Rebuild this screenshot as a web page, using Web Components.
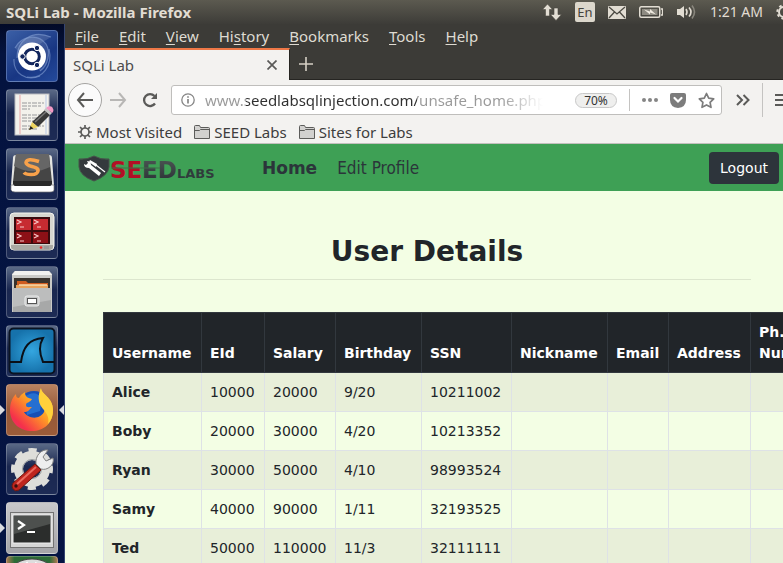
<!DOCTYPE html>
<html lang="en">
<head>
<meta charset="utf-8">
<title>SQLi Lab</title>
<style>
  html, body { margin: 0; height: 100%; overflow: hidden; background: #f3fee4; }
</style>
</head>
<body>
<lab-desktop></lab-desktop>

<script>
function define(name, html) {
  const template = document.createElement('template');
  template.innerHTML = html;
  customElements.define(name, class extends HTMLElement {
    constructor() {
      super();
      this.attachShadow({ mode: 'open' }).append(template.content.cloneNode(true));
    }
    connectedCallback() {
      const label = this.getAttribute('label');
      const control = this.shadowRoot.querySelector('[data-label]');
      if (label && control) control.setAttribute('aria-label', label);
    }
  });
}

/* System panel along the top edge */
define('top-panel', `
<style>
  :host { display: flex; align-items: center; height: 24px; padding-left: 6px; color: #e2ddd3;
    background: linear-gradient(#5c5a50, #3d3c38); overflow: hidden; white-space: nowrap; }
  h1 { flex: 1; margin: 0; font: bold 15px/24px "Noto Sans", sans-serif; }
  .tray { display: flex; align-items: center; gap: 13px; margin-right: -9px; font: 14px/24px "Noto Sans", sans-serif; }
  svg { display: block; flex: none; }
  .lang { width: 20px; height: 20px; border-radius: 2px; background: #dcd7cc; color: #45433d; text-align: center; font-size: 13px; line-height: 20px; }
</style>
<h1>SQLi Lab - Mozilla Firefox</h1>
<div class="tray">
  <svg width="20" height="18" viewBox="0 0 20 18" fill="#e2ddd3" stroke="#4a4840" stroke-width=".6"><path d="M5.500 1l5 5.500h-3V13h-4V6.500h-3z"/><path d="M12 5h4v6.500h3.500l-5.500 6-5.500-6H12z"/></svg>
  <span class="lang">En</span>
  <svg width="18" height="13" viewBox="0 0 18 13"><rect width="18" height="13" rx="1" fill="#e2ddd3"/><path d="M1 1l8 7 8-7M1 12l5.500-6M17 12l-5.500-6" fill="none" stroke="#4b4942" stroke-width="1.300"/></svg>
  <svg width="24" height="14" viewBox="0 0 24 14"><rect x=".75" y="1.750" width="20" height="10.500" rx="1.500" fill="none" stroke="#e2ddd3" stroke-width="1.500"/><rect x="3" y="4" width="15.500" height="6" fill="#8e8b82"/><path d="M22 4h1.500v6H22" fill="none" stroke="#e2ddd3" stroke-width="1.300"/><path d="M5 4.500l6 2V4l6 5.500-6-2v2z" fill="#efeae0"/></svg>
  <svg width="21" height="16" viewBox="0 0 21 16" fill="none" stroke="#e2ddd3" stroke-width="1.600"><path d="M1 5h3l4-3v12l-4-3H1z" fill="#e2ddd3" stroke="none"/><path d="M10 5q2 3 0 6M13 3.500q4 4.500 0 9"/><path d="M16 1.500q5 6.500 0 13" stroke="#89867d"/></svg>
  <time>1:21 AM</time>
  <svg width="16" height="16" viewBox="0 0 16 16" fill="none" stroke="#e2ddd3"><circle cx="8" cy="8" r="5" stroke-width="2"/><circle cx="8" cy="8" r="6.700" stroke-width="2" stroke-dasharray="2.600 2.660"/></svg>
</div>`);

/* One square tile of the launcher */
define('launcher-tile', `
<style>
  :host { display: block; position: relative; flex: none; height: 52px; }
  button { display: block; box-sizing: border-box; width: 100%; height: 52px; padding: 0; border: 1px solid rgba(255,255,255,.22); border-radius: 4px;
    background: var(--tile, linear-gradient(#5a6986, #1a2750 45%, #1d2b55)); overflow: hidden; }
  ::slotted(svg) { display: block; width: 50px; height: 50px; }
  .pip { display: none; position: absolute; top: 21px; width: 0; height: 0; border: 5px solid transparent; }
  .l { left: -6px; border-left-color: #d9dbe0; border-right-width: 0; }
  .r { right: -6px; border-right-color: #d9dbe0; border-left-width: 0; }
  :host([running]) .l, :host([focused]) .r { display: block; }
</style>
<button type="button" data-label><slot></slot></button><i class="pip l"></i><i class="pip r"></i>`);

define('app-launcher', `
<style>
  :host { display: flex; flex-direction: column; gap: 7px; box-sizing: border-box; padding: 6px 6px 0; overflow: hidden;
    background: linear-gradient(#020a27, #04133f 30px, #051443); border-right: 1px solid #354571; }
  .folded { margin-top: -5px; }
</style>
<launcher-tile label="Search your computer" style="--tile: linear-gradient(145deg, #3b5fa6, #183683 60%, #244a9c)">
  <svg viewBox="0 0 50 50"><g fill="none" stroke="#8ba6d8" stroke-opacity=".55" stroke-width="1.200"><path d="M44 6C24-2 10 10 10 27" fill="#fff" fill-opacity=".12"/><path d="M7 28c-1 14 12 23 26 17"/><path d="M20 46c16 3 26-12 22-28"/><path d="M8 17C14 5 31 2 39 13c5 8 2 22-6 27" fill="#fff" fill-opacity=".12"/></g><circle cx="25" cy="25.500" r="14" fill="#fff"/><circle cx="25" cy="25.500" r="7.300" fill="none" stroke="#12265d" stroke-width="3"/><g fill="#12265d" stroke="#fff"><circle cx="15.500" cy="25.500" r="2.700"/><circle cx="30" cy="17" r="2.700"/><circle cx="30" cy="34" r="2.700"/></g></svg>
</launcher-tile>
<launcher-tile label="Text Editor">
  <svg viewBox="0 0 50 50"><rect x="8" y="4" width="34" height="41" fill="#f3f2ec" stroke="#b9bbc0"/><path d="M13 5v39" stroke="#e9a7a7"/><path d="M39 5v39" stroke="#b8c9e6"/><path d="M15 13h22M15 16h20M15 19h8M15 25h22M15 28h18M15 31h20M15 36h22M15 39h16" stroke="#979899" stroke-width="1.200" stroke-dasharray="5 1 3 1"/><path d="M25 32l13-12 5 5-12 12z" fill="#383939"/><path d="M28 32l12-11" stroke="#777" stroke-width="1.500"/><path d="M22 40l3-8 6 5z" fill="#ecd35b"/><path d="M22 40l1.500-4 3 2.500z" fill="#222"/><path d="M37 20l2-2 6 5-2 2z" fill="#c6c6c6"/><path d="M39 18l2-1.500q3-1 4.500 1t.5 4.500L45 23z" fill="#f299c4"/></svg>
</launcher-tile>
<launcher-tile label="Sublime Text">
  <svg viewBox="0 0 50 50"><path d="M4 36L6 9q0-3 3-3h33q3 0 3 3l2 27-1 6H5z" fill="#e4e4e1"/><path d="M4 36v5q1 2 4 2h35q4 0 4-2v-5z" fill="#fff" stroke="#777" stroke-width=".7"/><path d="M9 5h33l3 28q0 4-3 4H9q-3 0-3-4z" fill="#454545"/><path d="M9 5h33l1 13Q25 27 7 17z" fill="#666"/><path d="M6 32h39v3l-2 2H8l-2-2z" fill="#292929"/><path d="M32 12.500q-12-4-13 1c0 5 13 3 12 8.500-1 5-12 4-14 1.500" fill="none" stroke="#f8a14a" stroke-width="3.600"/></svg>
</launcher-tile>
<launcher-tile label="Terminator">
  <svg viewBox="0 0 50 50"><rect x="3" y="5" width="44" height="37" rx="4" fill="#d6d6cf" stroke="#f5f5ef"/><path d="M4 37h42v2q0 3-4 3H8q-4 0-4-3z" fill="#aaa9a3"/><rect x="7" y="9" width="36" height="27" fill="#390b0e"/><path d="M9 11h15v11H9zM26 11h15v11H26z" fill="#c72b31"/><path d="M9 24h15v11H9zM26 24h15v11H26z" fill="#8c1016"/><path d="M10 12l4 2-4 2m3 3h4M27 12l4 2-4 2m3 3h4M10 26l4 2-4 2m3 3h4M27 26l4 2-4 2m3 3h4" fill="none" stroke="#f7c7c7" stroke-width="1.200"/><circle cx="34" cy="39.500" r="1.300" fill="#f12525"/><rect x="37" y="38" width="5" height="3" fill="#999"/></svg>
</launcher-tile>
<launcher-tile label="Files">
  <svg viewBox="0 0 50 50"><path d="M8 4h34l3 3v38H5V7z" fill="#cacac7"/><path d="M5 8h40l-3-4H8z" fill="#f1f1ef"/><rect x="7" y="11" width="36" height="13" fill="#39332d"/><path d="M10 21v-7h9l2 2h20v5z" fill="#cf5c1f"/><path d="M9 23v-5h32v5z" fill="#e7a25b"/><path d="M12 18h28" stroke="#f8dbac" stroke-width="1.500"/><path d="M6 21h38v24H6z" fill="#a7a8a8"/><path d="M6 21h38v12L6 40z" fill="#bcbdbd"/><rect x="18" y="29" width="14" height="10" rx="2" fill="#c5c6c6" stroke="#eee"/><rect x="20.500" y="31.500" width="9" height="5" fill="#fff" stroke="#555"/></svg>
</launcher-tile>
<launcher-tile label="Wireshark">
  <svg viewBox="0 0 50 50"><defs><radialGradient id="sea"><stop stop-color="#34a6e0"/><stop offset="1" stop-color="#1672ab"/></radialGradient></defs><rect x="2.500" y="2.500" width="45" height="45" rx="4" fill="url(#sea)" stroke="#0a1322" stroke-width="2"/><path d="M3 36h11C16 21 22 13 36 12q-6 10 0 24h11" fill="none" stroke="#0a1018" stroke-width="2"/></svg>
</launcher-tile>
<launcher-tile label="Firefox" running focused style="--tile: linear-gradient(#b9815f, #955939 50%, #9c5c39)">
  <svg viewBox="0 0 50 50"><defs><linearGradient id="fox" x1="1" y1="0" x2="0" y2="1"><stop stop-color="#fff14a"/><stop offset=".45" stop-color="#ff9a25"/><stop offset=".8" stop-color="#f5304b"/><stop offset="1" stop-color="#e52b80"/></linearGradient></defs><circle cx="27" cy="23" r="17" fill="#184fb5"/><path d="M18 12Q27 4 35 13l-2 13-13 4z" fill="#256fd1"/><path d="M34 3c0 6 12 9 12 22 0 13-9 21-21 21S3 38 3 25c0-7 2-12 6-16 0 3 1 4 3 4 2-4 5-5 6-6 0 4 2 6 7 7-2 4-6 3-6 6s3 2 6 2c-3 3-4 5-8 5 3 6 15 9 20 0 3-6-1-10-5-13 0-4 1-8 2-11z" fill="url(#fox)"/><path d="M34 3c0 7 12 9 12 22 0 6-2 11-5 14 3-11-8-15-9-23-1-6 1-10 2-13z" fill="#ffd13b"/></svg>
</launcher-tile>
<launcher-tile label="System Settings">
  <svg viewBox="0 0 50 50"><circle cx="25" cy="25" r="13.500" fill="none" stroke="#dededa" stroke-width="9"/><circle cx="25" cy="25" r="18.500" fill="none" stroke="#dededa" stroke-width="5" stroke-dasharray="8 6.530" stroke-dashoffset="4"/><circle cx="25" cy="25" r="9.500" fill="none" stroke="#999d9f"/><path d="M29 20c-1-8 5-15 12-14l-5 7 3 4 7-3c2 7-6 13-12 11z" fill="#eee" stroke="#838383"/><path d="M28 20l6 6-22 20q-4 2-6-1t0-6z" fill="#bf251e" stroke="#721910"/><path d="M29 23L10 40" stroke="#eb6a5e" stroke-width="2"/><circle cx="9" cy="42" r="1.700" fill="#36100e"/></svg>
</launcher-tile>
<launcher-tile label="Terminal" running style="--tile: linear-gradient(#c8c8ca, #a4a4a8)">
  <svg viewBox="0 0 50 50"><rect x="3.500" y="9.500" width="43" height="35" fill="#d6d6d6" stroke="#737373"/><rect x="6" y="12" width="38" height="28" fill="#2b2d2c" stroke="#efefef"/><path d="M7 13h36v8L7 31z" fill="#4d504e"/><path d="M11 18l6 4-6 4M20 29h8" fill="none" stroke="#fff" stroke-width="2.200"/></svg>
</launcher-tile>
<launcher-tile class="folded" label="Trash" style="--tile: linear-gradient(90deg, #a87950, #2c6b37 15%, #2c6b37 85%, #a87950)">
  <svg viewBox="0 0 50 50"><ellipse cx="25" cy="15" rx="21" ry="13" fill="#ddd" stroke="#444"/><ellipse cx="25" cy="15" rx="16" ry="9" fill="#333"/><path d="M15 10l5-4 3 5M28 6l7 3-5 4" fill="none" stroke="#fff" stroke-width="2"/></svg>
</launcher-tile>`);

define('browser-menu', `
<style>
  :host { display: flex; height: 24px; background: #3c3b37; }
  button { padding: 0; margin: 0 10px; border: 0; background: none; color: #dfdbd2; font: 15px/24px "Noto Sans", sans-serif; }
  u { text-underline-offset: 2px; }
</style>
<button type="button"><u>F</u>ile</button><button type="button"><u>E</u>dit</button><button type="button"><u>V</u>iew</button><button type="button">Hi<u>s</u>tory</button><button type="button"><u>B</u>ookmarks</button><button type="button"><u>T</u>ools</button><button type="button"><u>H</u>elp</button>`);

define('browser-tabs', `
<style>
  :host { display: flex; height: 32px; background: #3c3b37; box-shadow: inset 0 -1px #262522; }
  .tab { display: flex; align-items: center; justify-content: space-between; box-sizing: border-box; width: 225px; padding: 0 12px 0 8px;
    border-top: 2px solid #ef7847; border-right: 1px solid #262522; background: #f3f2f0; color: #4c4c4c; font: 15px/28px "Noto Sans", sans-serif; }
  button { display: block; padding: 0; border: 0; background: none; }
  svg { display: block; }
  .new { margin-left: 8px; }
</style>
<div class="tab"><span>SQLi Lab</span><button type="button" aria-label="Close tab"><svg width="10" height="10" viewBox="0 0 10 10"><path d="M.5.5l9 9m0-9l-9 9" stroke="#5a5a58" stroke-width="1.700"/></svg></button></div>
<button class="new" type="button" aria-label="New tab"><svg width="16" height="16" viewBox="0 0 16 16"><path d="M8 1v14M1 8h14" stroke="#d5d0c5" stroke-width="1.600"/></svg></button>`);

define('address-bar', `
<style>
  :host { display: flex; align-items: center; height: 40px; padding-left: 3px; background: #f3f2f0; overflow: hidden; }
  button { display: grid; place-items: center; flex: none; padding: 0; border: 0; background: none; height: 28px; }
  svg { display: block; fill: none; stroke: #5a5a58; }
  .back { width: 34px; height: 34px; box-sizing: border-box; border: 1px solid #a5a4a2; border-radius: 50%; background: #fbfbfb; }
  .forward, .reload { width: 32px; }
  .url { display: flex; align-items: center; flex: 1; min-width: 0; box-sizing: border-box; height: 30px; margin-left: 5px; padding: 0 6px 0 9px;
    border: 1px solid #bfbebc; border-radius: 3px; background: #fff; }
  input { flex: 1; min-width: 0; margin-left: 10px; padding: 0; border: 0; outline: 0; height: 26px; color: #333;
    font: 15px/26px "Noto Sans", sans-serif; -webkit-text-fill-color: transparent;
    background: linear-gradient(90deg, #999 41px, #2f2f2f 41px, #2f2f2f 212px, #999 212px, #999 296px, #fff 338px); -webkit-background-clip: text; background-clip: text; }
  .zoom { width: 42px; height: 15px; box-sizing: border-box; border: 1px solid #c8c8c8; border-radius: 8px; background: #efefee; color: #333; font: 12px/13px "Noto Sans", sans-serif; }
  .rule { flex: none; width: 1px; height: 22px; margin: 0 12px; background: #c4c3c1; }
  .actions { display: flex; gap: 12px; }
  .more { margin-left: 14px; }
  .tall { height: 34px; margin-right: 12px; }
</style>
<button class="back" type="button" aria-label="Back"><svg width="18" height="16" viewBox="0 0 18 16" stroke-width="2"><path d="M8 1L2 8l6 7M2 8h15"/></svg></button>
<button class="forward" type="button" aria-label="Forward" disabled><svg width="18" height="16" viewBox="0 0 18 16" stroke-width="2" style="stroke:#b8b7b5"><path d="M10 1l6 7-6 7M16 8H1"/></svg></button>
<button class="reload" type="button" aria-label="Reload"><svg width="16" height="16" viewBox="0 0 16 16" stroke-width="2.300"><path d="M12.500 4A6 6 0 1 0 13 11.500"/><path d="M15 1v6H9z" fill="#5a5a58" stroke="none"/></svg></button>
<div class="url">
  <svg width="14" height="14" viewBox="0 0 14 14" style="stroke:#868686"><circle cx="7" cy="7" r="6.200" stroke-width="1.300"/><path d="M7 6v4.500M7 3.200v1.600" stroke-width="1.700"/></svg>
  <input type="text" aria-label="Address" value="www.seedlabsqlinjection.com/unsafe_home.php">
  <button class="zoom" type="button">70%</button>
  <span class="rule"></span>
  <div class="actions">
    <button type="button" aria-label="Page actions"><svg width="16" height="4" viewBox="0 0 16 4"><g fill="#858585" stroke="none"><circle cx="2" cy="2" r="2"/><circle cx="8" cy="2" r="2"/><circle cx="14" cy="2" r="2"/></g></svg></button>
    <button type="button" aria-label="Save to Pocket"><svg width="16" height="15" viewBox="0 0 16 15"><path d="M2 0h12q2 0 2 2v5q0 7-8 8-8-1-8-8V2q0-2 2-2z" fill="#7c7c7c" stroke="none"/><path d="M4.500 5L8 8.500 11.500 5" stroke="#fff" stroke-width="2.200" stroke-linecap="round"/></svg></button>
    <button type="button" aria-label="Bookmark this page"><svg width="17" height="17" viewBox="0 0 17 17" style="stroke:#7c7c7c" stroke-width="1.700" stroke-linejoin="round"><path d="M8.500 1.500l2.200 4.600 5 .7-3.600 3.500.9 5-4.500-2.400L4 15.300l.9-5L1.300 6.800l5-.7z"/></svg></button>
  </div>
</div>
<button class="more" type="button" aria-label="More tools"><svg width="14" height="12" viewBox="0 0 14 12" stroke-width="2"><path d="M1 1l5 5-5 5M7.500 1l5 5-5 5"/></svg></button>
<span class="rule tall"></span>
<button type="button" aria-label="Open menu" style="margin-right:-8px"><svg width="16" height="12" viewBox="0 0 16 12" stroke-width="2"><path d="M0 1h16M0 6h16M0 11h16"/></svg></button>`);

define('bookmarks-bar', `
<style>
  :host { display: flex; align-items: center; gap: 12px; height: 23px; padding-left: 13px; background: #f3f2f0; border-bottom: 1px solid #c2c0bd; }
  button { display: flex; align-items: center; gap: 4px; padding: 0; border: 0; background: none; color: #3d3d3d; font: 15px/20px "Noto Sans", sans-serif; white-space: nowrap; }
  svg { display: block; fill: none; stroke: #5c5c5a; }
</style>
<button type="button"><svg width="14" height="14" viewBox="0 0 14 14"><circle cx="7" cy="7" r="4" stroke-width="1.700"/><path d="M7 0v3M7 11v3M0 7h3M11 7h3M2 2l2.200 2.200M9.800 9.800L12 12M12 2L9.800 4.200M4.200 9.800L2 12" stroke-width="1.700"/></svg>Most Visited</button>
<button type="button"><svg width="16" height="14" viewBox="0 0 16 14"><path d="M.5 13.500V1.500q0-1 1-1h4l1 2h8q1 0 1 1v10zM.5 5.500h5l1-1h9" fill="#d2d1cf"/></svg>SEED Labs</button>
<button type="button"><svg width="16" height="14" viewBox="0 0 16 14"><path d="M.5 13.500V1.500q0-1 1-1h4l1 2h8q1 0 1 1v10zM.5 5.500h5l1-1h9" fill="#d2d1cf"/></svg>Sites for Labs</button>`);

/* Site header */
define('site-navbar', `
<style>
  :host { display: flex; align-items: center; height: 47px; padding: 0 4px 0 13px; background: #3ea055; }
  svg { display: block; }
  nav { display: flex; align-items: center; gap: 20px; flex: 1; margin-left: 46px; }
  a { color: #2b353a; text-decoration: none; font: 17px/24px "DejaVu Sans Condensed", "DejaVu Sans", sans-serif; }
  a.current { font: bold 17px/24px "DejaVu Sans", sans-serif; }
  button { height: 32px; padding: 0 11px; border: 0; border-radius: 4px; background: #2d343b; color: #fff; font: 14px/32px "DejaVu Sans", sans-serif; }
</style>
<a href="#home" aria-label="SEED Labs"><svg width="138" height="30" viewBox="0 0 138 30">
  <defs><linearGradient id="steel" x2="0" y2="1"><stop stop-color="#4e5655"/><stop offset="1" stop-color="#293034"/></linearGradient></defs>
  <path d="M1 6Q9 7 16 3q7 4 15 3v8q-1 9-15 14Q2 23 1 14z" fill="#34393d" stroke="#47524b"/>
  <path d="M6 11l2 1 2-2-1-2q4 0 4 4l10 8-2 3-10-8q-5 0-5-4z" fill="#fff"/><path d="M12 7l7 4-1 3-7-5z" fill="#fff"/><path d="M18 12l9 7" stroke="#fff" stroke-width="1.200"/>
  <g font-family="DejaVu Sans, sans-serif" font-weight="bold"><text x="32" y="25" font-size="23" fill="#b30e25">SE</text><text x="64" y="25" font-size="23" fill="url(#steel)">ED</text><text x="99" y="25" font-size="13" fill="#303c3c">LABS</text></g>
  <path d="M33 15h49" stroke="#3c7048" stroke-width="1"/>
</svg></a>
<nav><a class="current" href="#home">Home</a><a href="#profile">Edit Profile</a></nav>
<button type="button">Logout</button>`);

define('user-table', `
<style>
  :host { display: block; }
  table { table-layout: fixed; width: 757px; border-collapse: collapse; color: #212529; font: 14px/21px "DejaVu Sans", sans-serif; }
  th, td { box-sizing: border-box; padding: 8px; border: 1px solid #dee2e6; text-align: left; vertical-align: bottom; }
  td { height: 39px; }
  thead th { height: 60px; color: #fff; background: #212529; border-color: #32383e; }
  tbody th, td { vertical-align: middle; }
  tbody tr:nth-child(odd) { background: #e8efd9; }
</style>
<table>
  <colgroup><col style="width:98px"><col style="width:63px"><col style="width:71px"><col style="width:86px"><col style="width:90px"><col style="width:96px"><col style="width:61px"><col style="width:82px"><col></colgroup>
  <thead><tr><th scope="col">Username</th><th scope="col">EId</th><th scope="col">Salary</th><th scope="col">Birthday</th><th scope="col">SSN</th><th scope="col">Nickname</th><th scope="col">Email</th><th scope="col">Address</th><th scope="col">Ph. Number</th></tr></thead>
  <tbody>
    <tr><th scope="row">Alice</th><td>10000</td><td>20000</td><td>9/20</td><td>10211002</td><td></td><td></td><td></td><td></td></tr>
    <tr><th scope="row">Boby</th><td>20000</td><td>30000</td><td>4/20</td><td>10213352</td><td></td><td></td><td></td><td></td></tr>
    <tr><th scope="row">Ryan</th><td>30000</td><td>50000</td><td>4/10</td><td>98993524</td><td></td><td></td><td></td><td></td></tr>
    <tr><th scope="row">Samy</th><td>40000</td><td>90000</td><td>1/11</td><td>32193525</td><td></td><td></td><td></td><td></td></tr>
    <tr><th scope="row">Ted</th><td>50000</td><td>110000</td><td>11/3</td><td>32111111</td><td></td><td></td><td></td><td></td></tr>
  </tbody>
</table>`);

define('details-page', `
<style>
  :host { display: block; background: #f3fee4; }
  main { padding: 44px 32px 0 38px; }
  h2 { margin: 0; padding-bottom: 10px; border-bottom: 1px solid #dce6ce; color: #212529; text-align: center; font: bold 28px/34px "DejaVu Sans", sans-serif; }
  user-table { margin-top: 32px; }
</style>
<site-navbar></site-navbar>
<main><h2>User Details</h2><user-table></user-table></main>`);

define('lab-desktop', `
<style>
  :host { display: grid; grid-template: auto minmax(0, 1fr) / 65px minmax(0, 1fr); height: 100vh; overflow: hidden; }
  top-panel { grid-column: 1 / -1; }
  .window { display: flex; flex-direction: column; overflow: hidden; background: #f3fee4; }
  .window > * { flex: none; }
</style>
<top-panel></top-panel>
<app-launcher></app-launcher>
<div class="window"><browser-menu></browser-menu><browser-tabs></browser-tabs><address-bar></address-bar><bookmarks-bar></bookmarks-bar><details-page></details-page></div>`);
</script>
</body>
</html>
